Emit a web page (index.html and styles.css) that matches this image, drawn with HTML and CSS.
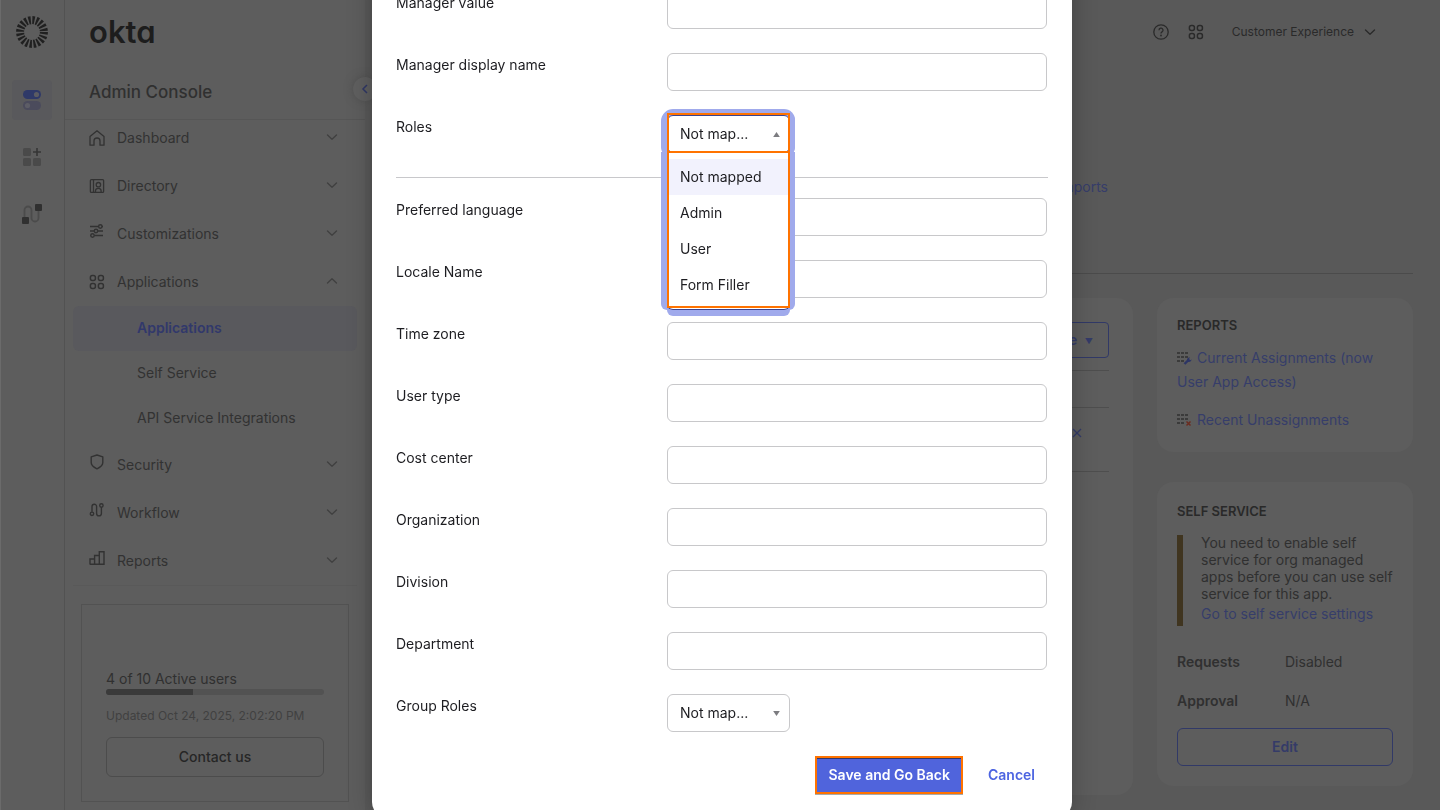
FILE: index.html
```html
<!DOCTYPE html>
<html lang="en">
<head>
<meta charset="utf-8">
<title>Admin Console</title>
<link rel="stylesheet" href="styles.css">
</head>
<body>
<svg class="defs" aria-hidden="true">
  <symbol id="down" viewBox="0 0 12 12"><path d="M1.500 4L6 8.300 10.500 4" fill="none" stroke="currentColor" stroke-width="1.300" stroke-linecap="round" stroke-linejoin="round"/></symbol>
  <symbol id="up" viewBox="0 0 12 12"><path d="M1.500 8L6 3.700 10.500 8" fill="none" stroke="currentColor" stroke-width="1.300" stroke-linecap="round" stroke-linejoin="round"/></symbol>
  <symbol id="apps" viewBox="0 0 16 16"><g fill="none" stroke="currentColor" stroke-width="1.500"><rect x="1.400" y="1.400" width="5" height="5" rx="2"/><rect x="9.400" y="1.400" width="5" height="5" rx="2"/><rect x="1.400" y="9.400" width="5" height="5" rx="2"/><rect x="9.400" y="9.400" width="5" height="5" rx="2"/></g></symbol>
  <symbol id="grid" viewBox="0 0 15 14"><g fill="#3b3b3b"><path d="M0 1h3v2H0zM4 1h3v2H4zM8 1h3v2H8zM0 5h3v2H0zM4 5h3v2H4zM8 5h3v2H8zM0 9h3v2H0zM4 9h3v2H4z"/></g></symbol>
</svg>
<div class="app">
  <nav class="rail" aria-label="Products">
    <svg class="burst" viewBox="-16 -16 32 32" width="32" height="32"><circle r="11.9" fill="none" stroke="#202020" stroke-width="8" stroke-dasharray="2.2 1.538"/></svg>
    <a class="rail-item current" href="#" aria-label="Admin"><svg width="20" height="20" viewBox="0 0 20 20"><rect x="1" y="0" width="18" height="9" rx="4.500" fill="#2f3968"/><circle cx="14.500" cy="4.500" r="2.600" fill="#5b5b62"/><rect x="1" y="11" width="18" height="9" rx="4.500" fill="#4b4b5c"/><circle cx="5.500" cy="15.500" r="2.600" fill="#5d5d66"/></svg></a>
    <a class="rail-item" href="#" aria-label="Apps"><svg width="20" height="20" viewBox="0 0 20 20"><g fill="#4a4a4a"><rect x="1" y="1" width="8" height="8" rx="1.500"/><rect x="1" y="11" width="8" height="8" rx="1.500"/><rect x="11" y="11" width="8" height="8" rx="1.500"/></g><path d="M15 1v8M11 5h8" stroke="#363636" stroke-width="1.600"/></svg></a>
    <a class="rail-item" href="#" aria-label="Workflows"><svg width="22" height="22" viewBox="0 0 22 22"><path d="M3.500 14V7a3.500 3.500 0 0 1 7 0v8a3.500 3.500 0 0 0 7 0V8" fill="none" stroke="#4b4b4b" stroke-width="1.800"/><rect x="1" y="14" width="7" height="7" rx="1" fill="#303030"/><rect x="14" y="1" width="7" height="7" rx="1" fill="#303030"/></svg></a>
  </nav>
  <aside class="sidebar">
    <header class="side-head">
      <div class="wordmark">okta</div>
      <div class="console">Admin Console</div>
    </header>
    <nav class="menu" aria-label="Admin Console">
      <a class="item" href="#"><svg class="ico" viewBox="0 0 16 16"><path d="M1 6.500L8 .8l7 5.700v8.700h-4V11a3 3 0 0 0-6 0v4.200H1z" fill="none" stroke="currentColor" stroke-width="1.300" stroke-linejoin="round"/></svg><span>Dashboard</span><svg class="chev"><use href="#down"/></svg></a>
      <a class="item" href="#"><svg class="ico" viewBox="0 0 16 16"><g fill="none" stroke="currentColor" stroke-width="1.300"><rect x="1.400" y="1.600" width="13.200" height="12.800" rx="1"/><path d="M4.500 1.600v12.800M6.500 14v-1.300c0-1.500 1.300-2.300 2.800-2.300s2.800.8 2.800 2.300V14"/><circle cx="9.400" cy="6.700" r="2.200"/></g></svg><span>Directory</span><svg class="chev"><use href="#down"/></svg></a>
      <a class="item" href="#"><svg class="ico high" viewBox="0 0 16 16"><g fill="none" stroke="currentColor" stroke-width="1.400"><path d="M1 3.500h8.500M13 3.500h1M1 8h4M9 8h5M1 12.500h.6M5.300 12.500H14"/><circle cx="11.300" cy="3.500" r="1.700"/><circle cx="7" cy="8" r="1.700"/><circle cx="3.500" cy="12.500" r="1.700"/></g></svg><span>Customizations</span><svg class="chev"><use href="#down"/></svg></a>
      <a class="item" href="#"><svg class="ico"><use href="#apps"/></svg><span>Applications</span><svg class="chev"><use href="#up"/></svg></a>
      <a class="sub active" href="#">Applications</a>
      <a class="sub" href="#">Self Service</a>
      <a class="sub" href="#">API Service Integrations</a>
      <a class="item" href="#"><svg class="ico high" viewBox="0 0 16 16"><path d="M8 1L2.200 2.800v5.700c0 3 3 5 5.800 6.300 2.800-1.300 5.800-3.300 5.800-6.300V2.800z" fill="none" stroke="currentColor" stroke-width="1.400" stroke-linejoin="round"/></svg><span>Security</span><svg class="chev"><use href="#down"/></svg></a>
      <a class="item" href="#"><svg class="ico high" viewBox="0 0 16 16"><g fill="none" stroke="currentColor" stroke-width="1.400"><path d="M3 9.800V4.500a2.300 2.300 0 0 1 4.600 0v7a2.300 2.300 0 0 0 4.800 0V5.200"/><circle cx="3" cy="11.800" r="1.700"/><circle cx="12.400" cy="3.500" r="1.700"/></g></svg><span>Workflow</span><svg class="chev"><use href="#down"/></svg></a>
      <a class="item" href="#"><svg class="ico high" viewBox="0 0 16 16"><path d="M1 14.300V9h4.600v5.300M5.600 14.300V5.500h4.700v8.800M10.300 14.300V1.700h4.700v12.600zM.7 14.300h14.600" fill="none" stroke="currentColor" stroke-width="1.400"/></svg><span>Reports</span><svg class="chev"><use href="#down"/></svg></a>
    </nav>
    <section class="usage">
      <div class="count" id="usage-label">4 of 10 Active users</div>
      <div class="bar" role="progressbar" aria-labelledby="usage-label" aria-valuenow="4" aria-valuemax="10"><div class="fill" style="width:40%"></div></div>
      <div class="updated">Updated Oct 24, 2025, 2:02:20 PM</div>
      <button class="contact" type="button">Contact us</button>
    </section>
    <button class="collapse" type="button" aria-label="Collapse menu"><svg width="12" height="12" viewBox="0 0 12 12"><path d="M8 2L4 6l4 4" fill="none" stroke="#2f3766" stroke-width="1.500"/></svg></button>
  </aside>
  <main class="main">
    <header class="top">
      <button class="icon-btn" type="button" aria-label="Help"><svg width="16" height="16" viewBox="0 0 16 16"><g fill="none" stroke="currentColor" stroke-width="1.300"><circle cx="8" cy="8" r="7.200"/><path d="M6 6.200a2 2 0 1 1 3 1.700c-.7.400-1 .7-1 1.600"/></g><circle cx="8" cy="11.500" r=".9" fill="currentColor"/></svg></button>
      <button class="icon-btn" type="button" aria-label="Apps"><svg width="16" height="16"><use href="#apps"/></svg></button>
      <button class="account" type="button">Customer Experience<svg width="12" height="12"><use href="#down"/></svg></button>
    </header>
    <div class="app-head"><a href="#">View Logs</a><a href="#">Monitor Imports</a></div>
    <div class="columns">
      <section class="card people">
        <div class="tools"><button class="outline" type="button">People <span class="tri">▼</span></button></div>
        <div class="line"></div>
        <div class="person"><button class="remove" type="button" aria-label="Remove"><svg width="10" height="10" viewBox="0 0 10 10"><path d="M1 1l8 8M9 1L1 9" stroke="currentColor" stroke-width="1.300"/></svg></button></div>
      </section>
      <div class="side-cards">
        <section class="card reports">
          <h2>REPORTS</h2>
          <a href="#"><svg class="report-ico" viewBox="0 0 15 14"><use href="#grid"/><path d="M7.500 13l4-4" stroke="#2c3566" stroke-width="2.400"/><path d="M10 8.500a2.500 2.500 0 0 1 3-2l-1 1.500 1.500 1.200 1-1a2.500 2.500 0 0 1-3.500 2.500z" fill="#2c3566"/></svg>Current Assignments (now User App Access)</a>
          <a href="#"><svg class="report-ico" viewBox="0 0 15 14"><use href="#grid"/><path d="M9.500 8.500l4 4M13.500 8.500l-4 4" stroke="#6b2c20" stroke-width="1.500"/></svg>Recent Unassignments</a>
        </section>
        <section class="card service">
          <h2>SELF SERVICE</h2>
          <div class="notice"><p>You need to enable self service for org managed apps before you can use self service for this app.</p><a href="#">Go to self service settings</a></div>
          <dl><dt>Requests</dt><dd>Disabled</dd><dt>Approval</dt><dd>N/A</dd></dl>
          <button class="outline wide" type="button">Edit</button>
        </section>
      </div>
    </div>
  </main>
</div>
<div class="backdrop">
  <form class="dialog" role="dialog" aria-label="Attribute mapping">
    <div class="fields">
      <div class="row"><label for="manager">Manager value</label><input id="manager" type="text"></div>
      <div class="row"><label for="display">Manager display name</label><input id="display" type="text"></div>
      <div class="row"><label for="roles">Roles</label>
        <div class="picker open">
          <select id="roles"><option>Not map...</option></select><svg class="arrow" viewBox="0 0 8 6"><path d="M0 6h8L4 0z"/></svg>
          <ul class="options" role="listbox" aria-label="Roles"><li role="option" aria-selected="true">Not mapped</li><li role="option">Admin</li><li role="option">User</li><li role="option">Form Filler</li></ul>
        </div>
      </div>
    </div>
    <div class="fields second">
      <div class="row"><label for="lang">Preferred language</label><input id="lang" type="text"></div>
      <div class="row"><label for="locale">Locale Name</label><input id="locale" type="text"></div>
      <div class="row"><label for="zone">Time zone</label><input id="zone" type="text"></div>
      <div class="row"><label for="utype">User type</label><input id="utype" type="text"></div>
      <div class="row"><label for="cost">Cost center</label><input id="cost" type="text"></div>
      <div class="row"><label for="org">Organization</label><input id="org" type="text"></div>
      <div class="row"><label for="division">Division</label><input id="division" type="text"></div>
      <div class="row"><label for="dept">Department</label><input id="dept" type="text"></div>
      <div class="row"><label for="group">Group Roles</label>
        <div class="picker"><select id="group"><option>Not map...</option></select><svg class="arrow" viewBox="0 0 8 6"><path d="M0 0h8L4 6z"/></svg></div>
      </div>
    </div>
    <footer class="actions"><button class="save" type="submit">Save and Go Back</button><a class="cancel" href="#">Cancel</a></footer>
  </form>
</div>
</body>
</html>
```
FILE: styles.css
```css
* { box-sizing: border-box; }
body { margin: 0; height: 100vh; overflow: hidden; background: #595959; color: #303030; font: 14px/24px Inter, "Liberation Sans", sans-serif; }
a { color: #363d6a; text-decoration: none; }
button { font: inherit; color: inherit; background: none; border: 0; padding: 0; }
.defs { display: none; }
.app { display: flex; height: 100vh; border-left: 1px solid #6b6b6b; }

.rail { flex: none; width: 64px; padding: 16px 1px 0 0; display: flex; flex-direction: column; align-items: center; background: #5d5d5d; border-right: 1px solid #525252; }
.burst { margin-bottom: 32px; }
.rail-item { width: 40px; height: 40px; margin-bottom: 17px; border-radius: 4px; display: grid; place-items: center; }
.rail-item.current { background: #59595c; }

.sidebar { position: relative; flex: none; width: 300px; background: #5d5d5d; }
.side-head { height: 120px; padding: 16px 24px 0; border-bottom: 1px solid #565656; }
.wordmark { color: #1d1d1d; font-size: 31px; line-height: 32px; font-weight: 600; font-feature-settings: "cv11"; }
.console { margin-top: 32px; font-size: 17px; font-weight: 500; }
.menu { margin: -6px 8px 0; border-bottom: 1px solid #595959; }
.item { height: 48px; padding: 0 19px 0 16px; display: flex; align-items: center; gap: 12px; color: #323232; }
.item span { flex: 1; }
.ico { width: 16px; height: 16px; }
.high { margin-bottom: 6px; }
.chev { width: 12px; height: 12px; color: #404040; margin-bottom: 2px; }
.sub { display: flex; align-items: center; height: 45px; padding: 0 0 2px 64px; border-radius: 6px; color: #323232; }
.sub.active { background: #59595d; color: #31386b; font-weight: 600; }
.usage { margin: 18px 16px 0; padding: 62px 24px 24px; border: 1px solid #525252; }
.bar { height: 6px; margin-top: -2px; border-radius: 3px; overflow: hidden; background: #525252; }
.fill { height: 6px; background: #3a3a3a; }
.updated { margin: 9px 0; font-size: 12px; color: #414141; }
.contact { width: 100%; height: 40px; border: 1px solid #4c4c4c; border-radius: 6px; color: #262626; font-weight: 500; }
.collapse { position: absolute; top: 77px; right: -12px; width: 24px; height: 24px; border-radius: 50%; display: grid; place-items: center; background: #5f5f5f; box-shadow: 0 0 8px #505050; }

.main { flex: 1; min-width: 0; padding: 0 27px 0 24px; }
.top { height: 64px; display: flex; justify-content: flex-end; align-items: center; gap: 19px; padding-right: 37px; color: #2a2a2a; }
.icon-btn { display: grid; }
.account { display: flex; align-items: center; gap: 10px; margin-left: 9px; font-size: 12px; }
.app-head { height: 210px; padding: 111px 305px 0 0; display: flex; justify-content: flex-end; gap: 24px; border-bottom: 1px solid #4b4b4b; }
.columns { display: grid; grid-template-columns: 1fr 256px; gap: 24px; padding-top: 24px; align-items: start; }
.card { background: #5d5d5d; border-radius: 16px; }
.people { height: 497px; padding: 24px; }
.tools { display: flex; justify-content: flex-end; padding-bottom: 12px; border-bottom: 1px solid #4e4e4e; }
.outline { height: 36px; padding: 0 15px; border: 1px solid #313967; border-radius: 4px; color: #343b68; font-weight: 600; }
.tri { font-size: 8px; margin-left: 4px; vertical-align: 1px; }
.line { height: 37px; border-bottom: 1px solid #4e4e4e; }
.person { height: 64px; padding: 20px 27px; display: flex; justify-content: flex-end; border-bottom: 1px solid #4e4e4e; }
.remove { height: 10px; line-height: 10px; color: #343b68; }
.side-cards { display: grid; gap: 30px; }
.side-cards .card { padding: 15px 20px 20px; }
.side-cards .service { padding-top: 17px; }
h2 { margin: 0; font-size: 13px; line-height: 24px; font-weight: 600; color: #292929; }
.reports a { display: block; margin: 9px 0 14px; }
.reports a:last-child { margin-bottom: 0; }
.report-ico { width: 15px; height: 14px; margin-right: 5px; vertical-align: -2px; }
.notice { display: flow-root; margin-top: 12px; padding: 0 0 2px 18px; border-left: 6px solid #403520; line-height: 17px; }
.notice p { margin: -1px 0 0; padding-bottom: 2px; }
.notice a { display: block; line-height: 20px; }
dl { margin: 24px 0 15px; display: grid; grid-template-columns: 108px 1fr; row-gap: 15px; }
dt { font-weight: 600; }
dd { margin: 0; }
.wide { width: 100%; height: 38px; border-radius: 6px; }

.backdrop { position: fixed; inset: 0; overflow: hidden; display: flex; justify-content: center; align-items: flex-end; padding-left: 4px; }
.dialog { width: 700px; max-width: 100%; margin-bottom: -8px; padding: 24px; background: #fff; border-radius: 16px; box-shadow: 0 0 24px rgba(0, 0, 0, .25); color: #1d1d21; }
.fields { display: grid; gap: 24px; padding-bottom: 24px; }
.second { border-top: 1px solid #c8c8cb; padding-top: 20px; }
.row { display: grid; grid-template-columns: 271px 380px; }
.row input, .picker select { height: 38px; width: 100%; border: 1px solid #c8c8ca; border-radius: 6px; background: #fff; font: inherit; color: inherit; }
.picker { position: relative; width: 123px; height: 38px; border-radius: 6px; }
.picker select { appearance: none; display: block; padding: 0 12px; }
.arrow { position: absolute; right: 10px; top: 17px; width: 7px; height: 5px; fill: #7c7c80; }
.open { box-shadow: 0 0 0 5px #a0aaec, 0 -1px 0 5px #a0aaec, -1px 0 0 5px #a0aaec; }
.open select { border-color: #3b4390; }
.open::before { content: ""; position: absolute; z-index: 3; inset: -2px 0 0; border: 2px solid #ff7300; pointer-events: none; }
.options { position: absolute; z-index: 2; top: 37px; left: 0; width: 123px; margin: 0; padding: 7px 0 6px; list-style: none; background: #fff; border-bottom: 1px solid #3b4390; border-radius: 0 0 6px 6px; box-shadow: -6px 0 #a0aaec, 5px 0 #a0aaec, 0 6px #a0aaec; }
.options::after { content: ""; position: absolute; inset: -1px 0 1px; border: 2px solid #ff7300; }
.options li { height: 36px; padding: 6px 13px; }
.options [aria-selected] { background: #f2f2fd; }
.actions { display: flex; justify-content: flex-end; align-items: center; gap: 25px; padding-right: 13px; }
.save { height: 38px; padding: 0 11px; border: 2px solid #ff7300; background: #5064dc; box-shadow: inset 0 1px #35386b, 0 1px #aaa; color: #fff; font-weight: 600; }
.cancel { color: #4c64e1; font-weight: 600; }
```
